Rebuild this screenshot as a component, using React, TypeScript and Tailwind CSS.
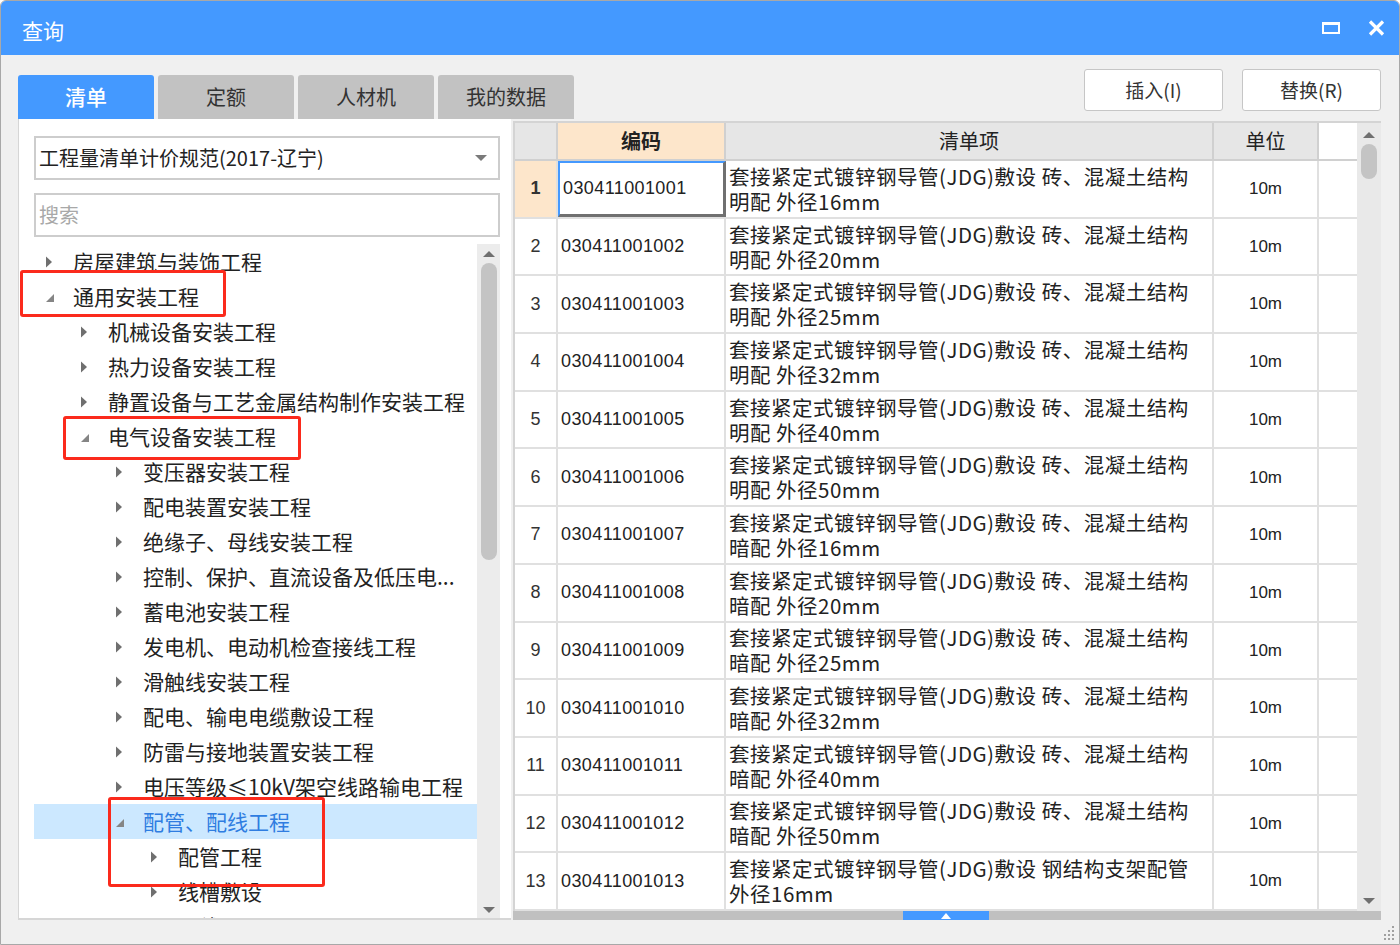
import React from "react"

const cjk = "font-['Noto_Sans_CJK_SC','Liberation_Sans',sans-serif]"

type Node = { label: string; level: number; open?: boolean; selected?: boolean }

const tree: Node[] = [
  { label: "房屋建筑与装饰工程", level: 0 },
  { label: "通用安装工程", level: 0, open: true },
  { label: "机械设备安装工程", level: 1 },
  { label: "热力设备安装工程", level: 1 },
  { label: "静置设备与工艺金属结构制作安装工程", level: 1 },
  { label: "电气设备安装工程", level: 1, open: true },
  { label: "变压器安装工程", level: 2 },
  { label: "配电装置安装工程", level: 2 },
  { label: "绝缘子、母线安装工程", level: 2 },
  { label: "控制、保护、直流设备及低压电...", level: 2 },
  { label: "蓄电池安装工程", level: 2 },
  { label: "发电机、电动机检查接线工程", level: 2 },
  { label: "滑触线安装工程", level: 2 },
  { label: "配电、输电电缆敷设工程", level: 2 },
  { label: "防雷与接地装置安装工程", level: 2 },
  { label: "电压等级≤10kV架空线路输电工程", level: 2 },
  { label: "配管、配线工程", level: 2, open: true, selected: true },
  { label: "配管工程", level: 3 },
  { label: "线槽敷设", level: 3 },
  { label: "配线工程", level: 3 },
]

const indent = ["pl-[11px]", "pl-[46px]", "pl-[81px]", "pl-[116px]"]

const base = "套接紧定式镀锌钢导管(JDG)敷设 砖、混凝土结构"
const items = [
  { code: "030411001001", a: base, b: "明配 外径16mm" },
  { code: "030411001002", a: base, b: "明配 外径20mm" },
  { code: "030411001003", a: base, b: "明配 外径25mm" },
  { code: "030411001004", a: base, b: "明配 外径32mm" },
  { code: "030411001005", a: base, b: "明配 外径40mm" },
  { code: "030411001006", a: base, b: "明配 外径50mm" },
  { code: "030411001007", a: base, b: "暗配 外径16mm" },
  { code: "030411001008", a: base, b: "暗配 外径20mm" },
  { code: "030411001009", a: base, b: "暗配 外径25mm" },
  { code: "030411001010", a: base, b: "暗配 外径32mm" },
  { code: "030411001011", a: base, b: "暗配 外径40mm" },
  { code: "030411001012", a: base, b: "暗配 外径50mm" },
  { code: "030411001013", a: "套接紧定式镀锌钢导管(JDG)敷设 钢结构支架配管", b: "外径16mm" },
]

function Caret({ open }: { open?: boolean }) {
  if (open) {
    return (
      <svg width="10" height="10" viewBox="0 0 10 10" className="mt-[3px]">
        <path d="M9 1 L9 9 L1 9 Z" fill="#858585" />
      </svg>
    )
  }
  return (
    <svg width="8" height="12" viewBox="0 0 8 12">
      <path d="M1 0.5 L7 6 L1 11.5 Z" fill="#6f6f6f" />
    </svg>
  )
}

function Tri({ down, color = "#707070" }: { down?: boolean; color?: string }) {
  return (
    <svg width="14" height="8" viewBox="0 0 14 8">
      <path d={down ? "M1 1 L13 1 L7 7 Z" : "M1 7 L13 7 L7 1 Z"} fill={color} />
    </svg>
  )
}

export default function App() {
  return (
    <div className={`relative flex h-[945px] w-[1400px] flex-col overflow-hidden rounded-t-[6px] border border-[#a8a8a8] bg-[#f0f0f0] ${cjk}`}>
      {/* title bar */}
      <div className="flex h-[54px] shrink-0 items-center justify-between bg-[#4499ff] pl-[21px] pr-[14px]">
        <span className="pt-[5px] text-[21px] text-white">查询</span>
        <div className="flex items-center gap-[28px]">
          <div className="h-[12px] w-[18px] border-2 border-t-[3px] border-white" />
          <svg width="17" height="16" viewBox="0 0 17 16">
            <path d="M2 1.5 L15 14.5 M15 1.5 L2 14.5" stroke="white" strokeWidth="3.2" />
          </svg>
        </div>
      </div>

      {/* toolbar */}
      <div className="flex h-[64px] shrink-0 justify-between pl-[17px] pr-[18px]">
        <div className="flex items-end gap-[4px]">
          <div className="flex h-[44px] w-[136px] items-center justify-center rounded-t-[3px] bg-[#4499ff] text-[21px] font-medium text-white">清单</div>
          <div className="flex h-[44px] w-[136px] items-center justify-center rounded-t-[3px] bg-[#c2c2c2] text-[20px] text-[#333]">定额</div>
          <div className="flex h-[44px] w-[136px] items-center justify-center rounded-t-[3px] bg-[#c2c2c2] text-[20px] text-[#333]">人材机</div>
          <div className="flex h-[44px] w-[136px] items-center justify-center rounded-t-[3px] bg-[#c2c2c2] text-[20px] text-[#333]">我的数据</div>
        </div>
        <div className="mt-[14px] flex gap-[19px]">
          <button className="flex h-[42px] w-[139px] items-center justify-center rounded-[3px] border border-[#c6c6c6] bg-white text-[19px] text-[#333]">插入(I)</button>
          <button className="flex h-[42px] w-[139px] items-center justify-center rounded-[3px] border border-[#c6c6c6] bg-white text-[19px] text-[#333]">替换(R)</button>
        </div>
      </div>

      {/* content */}
      <div className="flex h-[801px] shrink-0 gap-[2px] pl-[17px]">
        {/* left panel */}
        <div className="flex w-[493px] flex-col border-b-2 border-l border-[#d6d6d6] bg-white pl-[15px] pr-[11px] pt-[17px]">
          <div className="flex h-[44px] items-center justify-between border-2 border-[#cdcdcd] pl-[3px] pr-[10px]">
            <span className="text-[20px] text-[#222]">工程量清单计价规范(2017-辽宁)</span>
            <Tri down color="#7a7a7a" />
          </div>
          <div className="mt-[13px] flex h-[44px] items-center border-2 border-[#cdcdcd] pl-[3px]">
            <span className="text-[20px] text-[#a8a8a8]">搜索</span>
          </div>
          <div className="mt-[7px] flex min-h-0 flex-1">
            <div className="flex-1 overflow-hidden">
              {tree.map((n, i) => (
                <div
                  key={i}
                  className={`flex h-[35px] items-center ${indent[n.level]} ${n.selected ? "bg-[#cce8ff]" : ""}`}
                >
                  <div className="flex w-[28px] items-center">
                    <Caret open={n.open} />
                  </div>
                  <span className={`whitespace-nowrap text-[21px] ${n.selected ? "text-[#2f7de1]" : "text-[#222]"}`}>{n.label}</span>
                </div>
              ))}
            </div>
            <div className="flex w-[23px] flex-col items-center bg-[#ececec]">
              <div className="mt-[6px]"><Tri /></div>
              <div className="mt-[5px] h-[297px] w-[16px] rounded-full bg-[#c4c4c4]" />
              <div className="flex-1" />
              <div className="mb-[4px]"><Tri down /></div>
            </div>
          </div>
        </div>

        {/* right panel */}
        <div className="flex w-[868px] flex-col pt-[2px]">
          <div className="flex min-h-0 flex-1 border-t-2 border-l-2 border-[#d4d4d4]">
            <div className="flex-1 overflow-hidden bg-white">
              <div className="flex h-[38px] border-b-2 border-[#d0d0d0] text-[20px] text-[#222]">
                <div className="w-[43px] border-r-2 border-[#d0d0d0] bg-[#e6e6e6]" />
                <div className="flex w-[168px] items-center justify-center border-r-2 border-[#d0d0d0] bg-[#fde6cb] font-bold">编码</div>
                <div className="flex w-[488px] items-center justify-center border-r-2 border-[#d0d0d0] bg-[#e6e6e6]">清单项</div>
                <div className="flex w-[105px] items-center justify-center border-r-2 border-[#d0d0d0] bg-[#e6e6e6]">单位</div>
              </div>
              {items.map((r, i) => (
                <div key={r.code} className="flex h-[57.7px] border-b-2 border-[#e0e0e0]">
                  <div
                    className={`flex w-[43px] items-center justify-center border-r-2 border-[#e0e0e0] font-['Liberation_Sans',sans-serif] text-[18px] text-[#333] ${
                      i === 0 ? "bg-[#fde6cb] font-bold" : ""
                    }`}
                  >
                    {i + 1}
                  </div>
                  <div
                    className={`flex w-[168px] items-center pl-[3px] font-['Liberation_Sans',sans-serif] text-[18px] tracking-[0.4px] text-[#222] ${
                      i === 0
                        ? "border-2 border-b-[3px] border-r-[3px] border-l-[#4499ff] border-t-[#4499ff] border-r-[#707070] border-b-[#707070]"
                        : "border-r-2 border-[#e0e0e0]"
                    }`}
                  >
                    {r.code}
                  </div>
                  <div className="flex w-[488px] items-center border-r-2 border-[#e0e0e0] pl-[3px]">
                    <p className="whitespace-nowrap text-[20.5px] leading-[25px] tracking-[0.5px] text-[#222]">
                      {r.a}
                      <br />
                      {r.b}
                    </p>
                  </div>
                  <div className="flex w-[105px] items-center justify-center border-r-2 border-[#e0e0e0] font-['Liberation_Sans',sans-serif] text-[17px] text-[#222]">
                    10m
                  </div>
                </div>
              ))}
            </div>
            <div className="flex w-[24px] flex-col items-center bg-[#e9e9e9]">
              <div className="mt-[8px]"><Tri /></div>
              <div className="mt-[5px] h-[35px] w-[16px] rounded-full bg-[#c4c4c4]" />
              <div className="flex-1" />
              <div className="mb-[6px]"><Tri down /></div>
            </div>
          </div>
          <div className="flex h-[9px] shrink-0 bg-[#c0c0c0] pl-[390px]">
            <div className="flex h-[9px] w-[86px] items-center justify-center bg-[#4499ff]">
              <svg width="10" height="6" viewBox="0 0 10 6">
                <path d="M0 6 L10 6 L5 0 Z" fill="white" />
              </svg>
            </div>
          </div>
        </div>
      </div>

      {/* bottom strip */}
      <div className="flex flex-1 items-end justify-end pb-[4px] pr-[4px]">
        <svg width="12" height="14" viewBox="0 0 12 14">
          <g fill="#a0a0a0">
            <rect x="9" y="0" width="2" height="2" />
            <rect x="9" y="4" width="2" height="2" />
            <rect x="5" y="4" width="2" height="2" />
            <rect x="9" y="8" width="2" height="2" />
            <rect x="5" y="8" width="2" height="2" />
            <rect x="1" y="8" width="2" height="2" />
            <rect x="9" y="12" width="2" height="2" />
            <rect x="5" y="12" width="2" height="2" />
            <rect x="1" y="12" width="2" height="2" />
          </g>
        </svg>
      </div>

      {/* red annotation boxes */}
      <div className="pointer-events-none absolute left-[19px] top-[269px] h-[47px] w-[206px] rounded-[3px] border-[3.5px] border-[#fb2a1c]" />
      <div className="pointer-events-none absolute left-[62px] top-[415px] h-[44px] w-[238px] rounded-[3px] border-[3.5px] border-[#fb2a1c]" />
      <div className="pointer-events-none absolute left-[107px] top-[796px] h-[90px] w-[217px] rounded-[3px] border-[3.5px] border-[#fb2a1c]" />
    </div>
  )
}
